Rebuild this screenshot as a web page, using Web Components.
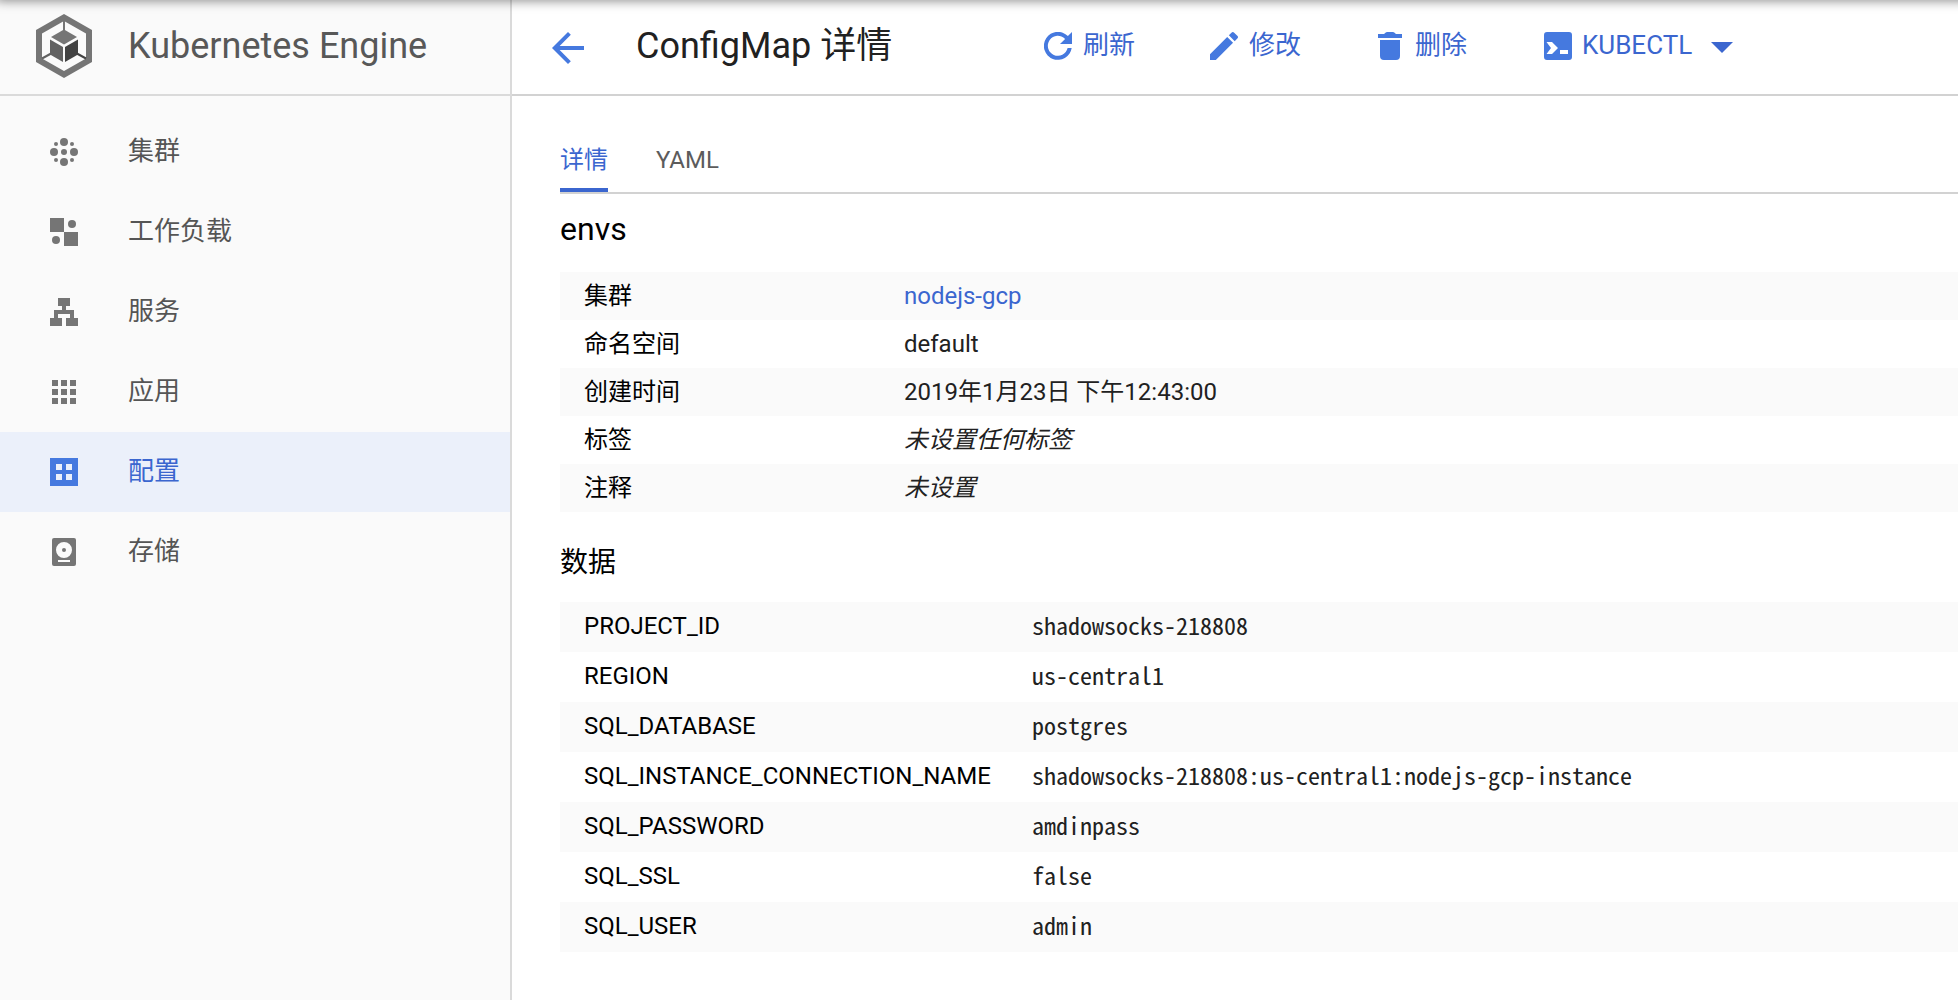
<!DOCTYPE html>
<html lang="zh-CN">
<head>
<meta charset="utf-8">
<title>ConfigMap 详情</title>
<style>
html,body{margin:0;height:100%;overflow:hidden;background:#fff}
body{font-family:Roboto,"Noto Sans CJK SC",sans-serif;font-size:24px;color:#212121}
</style>
</head>
<body>
<gke-app>
  <gke-sidebar slot="side" heading="Kubernetes Engine">
    <gke-nav-item icon="clusters">集群</gke-nav-item>
    <gke-nav-item icon="workloads">工作负载</gke-nav-item>
    <gke-nav-item icon="services">服务</gke-nav-item>
    <gke-nav-item icon="apps">应用</gke-nav-item>
    <gke-nav-item icon="config" active>配置</gke-nav-item>
    <gke-nav-item icon="storage">存储</gke-nav-item>
  </gke-sidebar>
  <gke-toolbar heading="ConfigMap 详情">
    <gke-action icon="refresh">刷新</gke-action>
    <gke-action icon="edit">修改</gke-action>
    <gke-action icon="trash" class="wide">删除</gke-action>
    <gke-action icon="shell" menu>KUBECTL</gke-action>
  </gke-toolbar>
  <gke-tabs>
    <gke-tab active>详情</gke-tab>
    <gke-tab>YAML</gke-tab>
  </gke-tabs>
  <gke-section heading="envs" class="info">
    <gke-row label="集群"><gke-link>nodejs-gcp</gke-link></gke-row>
    <gke-row label="命名空间">default</gke-row>
    <gke-row label="创建时间">2019年1月23日 下午12:43:00</gke-row>
    <gke-row label="标签"><i>未设置任何标签</i></gke-row>
    <gke-row label="注释"><i>未设置</i></gke-row>
  </gke-section>
  <gke-section heading="数据" class="data" compact>
    <gke-row mono label="PROJECT_ID">shadowsocks-218808</gke-row>
    <gke-row mono label="REGION">us-central1</gke-row>
    <gke-row mono label="SQL_DATABASE">postgres</gke-row>
    <gke-row mono label="SQL_INSTANCE_CONNECTION_NAME">shadowsocks-218808:us-central1:nodejs-gcp-instance</gke-row>
    <gke-row mono label="SQL_PASSWORD">amdinpass</gke-row>
    <gke-row mono label="SQL_SSL">false</gke-row>
    <gke-row mono label="SQL_USER">admin</gke-row>
  </gke-section>
</gke-app>
<script>
const ICONS = {
  logo: ['0 0 56 64', '<path fill="#757575" fill-rule="evenodd" d="M28 0 56 16V48L28 64 0 48V16ZM28 7 6 19.5V44.5L28 57 50 44.500V19.500Z"/><path stroke="#757575" stroke-width="2" d="M28 4V18"/><path stroke="#616161" stroke-width="2" d="M6 44.500 16 39"/><path stroke="#424242" stroke-width="2" d="M50 44.500 40 39"/><path fill="#757575" d="M28 15.500 41 23 28 30.500 15 23Z"/><path fill="#616161" d="M14 25.500 27 33V48L14 40.500Z"/><path fill="#424242" d="M42 25.500 29 33V48L42 40.500Z"/>'],
  clusters: ['0 0 28 28', '<circle cx="14" cy="4" r="4"/><circle cx="14" cy="24" r="4"/><circle cx="4" cy="14" r="4"/><circle cx="24" cy="14" r="4"/><circle cx="14" cy="14" r="3"/><circle cx="6" cy="6" r="2"/><circle cx="22" cy="6" r="2"/><circle cx="6" cy="22" r="2"/><circle cx="22" cy="22" r="2"/>'],
  workloads: ['0 0 28 28', '<path d="M0 0H14V14H0ZM14 14H28V28H14Z"/><circle cx="22" cy="6" r="4"/><circle cx="6" cy="22" r="4"/>'],
  services: ['0 0 28 28', '<path d="M8 0H20V8H16V12H24V20H28V28H16V20H20V16H8V20H12V28H0V20H4V12H12V8H8Z"/>'],
  apps: ['0 0 28 28', '<path d="M2 2h6v6H2zM11 2h6v6h-6zM20 2h6v6h-6zM2 11h6v6H2zM11 11h6v6h-6zM20 11h6v6h-6zM2 20h6v6H2zM11 20h6v6h-6zM20 20h6v6h-6z"/>'],
  config: ['0 0 28 28', '<path fill-rule="evenodd" d="M0 0H28V28H0ZM6 6V12H12V6ZM16 6V12H22V6ZM6 16V22H12V16ZM16 16V22H22V16Z"/>'],
  storage: ['0 0 28 28', '<path fill-rule="evenodd" d="M4 0H24a2 2 0 0 1 2 2V26a2 2 0 0 1-2 2H4a2 2 0 0 1-2-2V2a2 2 0 0 1 2-2ZM14 4a8 8 0 1 0 0 16 8 8 0 0 0 0-16ZM14 10a2 2 0 1 1 0 4 2 2 0 0 1 0-4ZM8 22V24H20V22Z"/>'],
  back: ['4 4 16 16', '<path d="M20 11H7.830l5.590-5.590L12 4l-8 8 8 8 1.410-1.410L7.830 13H20v-2z"/>'],
  refresh: ['0 0 28 28', '<path d="M23.900 4.100A14 14 0 1 0 27.700 16H23.600A10 10 0 1 1 21.100 6.900L16 12H28V0Z"/>'],
  edit: ['3 3 18 18', '<path d="M3 17.250V21h3.750L17.810 9.940l-3.750-3.750L3 17.250zM20.710 7.040c.39-.39.39-1.020 0-1.410l-2.340-2.340c-.39-.39-1.020-.39-1.410 0l-1.830 1.830 3.750 3.750 1.830-1.830z"/>'],
  trash: ['0 0 28 28', '<path d="M4 8H24V24a4 4 0 0 1-4 4H8a4 4 0 0 1-4-4ZM2 2H8Q10 0 11 0H17Q18 0 20 2H26V6H2Z"/>'],
  shell: ['0 0 28 28', '<path fill-rule="evenodd" d="M3 0H25a3 3 0 0 1 3 3V25a3 3 0 0 1-3 3H3a3 3 0 0 1-3-3V3a3 3 0 0 1 3-3ZM2.500 10 7 16 2.500 22H8L14 16 8 10ZM16 18V22H24V18Z"/>']
};
function define(name, render) {
  customElements.define(name, class extends HTMLElement {
    constructor() {
      super();
      this.attachShadow({ mode: 'open' }).innerHTML = render(this);
    }
  });
}
const attr = (el, n) => el.getAttribute(n) || '';

define('gke-icon', el => {
  const [box, body] = ICONS[attr(el, 'name')];
  return `<style>:host{display:block;flex:none;width:28px;height:28px}svg{display:block;width:100%;height:100%;fill:currentColor}</style><svg viewBox="${box}">${body}</svg>`;
});

define('gke-app', () => `<style>
:host{display:grid;grid-template-columns:512px 1fr;height:1000px;position:relative;overflow:hidden}
main{min-width:0}
.shade{position:absolute;inset:-10px -20px auto -4px;height:10px;box-shadow:0 0 12px rgba(0,0,0,.55);}
</style><slot name="side"></slot><main><slot></slot></main><div class="shade"></div>`);

define('gke-sidebar', el => `<style>
:host{display:block;box-sizing:border-box;width:512px;height:1000px;background:#fafafa;border-right:2px solid #dadada}
header{display:flex;align-items:center;box-sizing:border-box;height:96px;border-bottom:2px solid #dadada;padding-left:36px}
gke-icon{width:56px;height:64px;margin:-2px 36px 0 0}
h1{margin:-2px 0 0;font-size:36px;font-weight:400;line-height:48px;color:#585858;white-space:nowrap}
nav{padding-top:16px}
</style><header><gke-icon name="logo"></gke-icon><h1>${attr(el, 'heading')}</h1></header><nav><slot></slot></nav>`);

define('gke-nav-item', el => `<style>
:host{display:flex;align-items:center;height:80px;padding-left:50px;font-size:26px;color:#555}
:host([active]){background:#ebf0fa;color:#3b66cf}
gke-icon{margin-right:50px;color:#757575}
:host([active]) gke-icon{color:#4579df}
span{line-height:40px;margin-top:-2px}
</style><gke-icon name="${attr(el, 'icon')}"></gke-icon><span><slot></slot></span>`);

define('gke-toolbar', el => `<style>
:host{display:flex;align-items:center;box-sizing:border-box;height:96px;border-bottom:2px solid #d2d2d2;padding-left:40px}
.back{width:32px;height:32px;color:#4579df;margin:2px 52px 0 0}
h2{margin:-2px 0 0;width:404px;font-size:36px;font-weight:400;line-height:48px;color:#212121;white-space:nowrap}
</style><gke-icon class="back" name="back"></gke-icon><h2>${attr(el, 'heading')}</h2><slot></slot>`);

define('gke-action', el => `<style>
:host{display:flex;align-items:center;box-sizing:border-box;width:166px;padding-left:4px;font-size:26px;color:#3b66cf}
:host(.wide){width:168px}
:host([menu]){width:auto}
gke-icon{color:#4579df;margin:-2px 11px 0 0}
:host([menu]) gke-icon{margin-right:10px}
span{line-height:40px;margin-top:-4px;white-space:nowrap}
i{width:0;height:0;border:solid transparent;border-width:11px 11px 0;border-top-color:#3b66cf;margin:0 0 0 19px}
</style><gke-icon name="${attr(el, 'icon')}"></gke-icon><span><slot></slot></span>${el.hasAttribute('menu') ? '<i></i>' : ''}`);

define('gke-tabs', () => `<style>
:host{display:flex;gap:48px;align-items:flex-end;box-sizing:border-box;height:98px;margin-left:48px;border-bottom:2px solid #d2d2d2}
</style><slot></slot>`);

define('gke-tab', () => `<style>
:host{display:block;box-sizing:border-box;height:56px;line-height:48px;border-bottom:4px solid transparent;color:#5c5c5c}
:host([active]){color:#3b66cf;border-color:#3b66cf}
</style><slot></slot>`);

define('gke-section', el => `<style>
:host{display:block;margin-left:48px;--label:320px}
:host([compact]){--label:448px;--row:50px}
h3{margin:0;height:78px;line-height:70px;font-size:32px;font-weight:400;color:#000}
:host([compact]) h3{height:90px;line-height:102px;font-size:28px}
</style><h3>${attr(el, 'heading')}</h3><slot></slot>`);

define('gke-row', el => `<style>
:host{display:grid;grid-template-columns:var(--label) 1fr;align-items:center;box-sizing:border-box;height:var(--row,48px);padding-left:24px}
:host(:nth-child(odd)){background:#fafafa}
b{font-weight:400;color:#000}
b,span{line-height:30px;white-space:nowrap}
:host([mono]) b{margin-top:-2px}
:host([mono]) span{font-family:"Noto Sans Mono CJK SC","Liberation Mono",monospace;margin-top:-4px}
</style><b>${attr(el, 'label')}</b><span><slot></slot></span>`);

define('gke-link', () => `<style>:host{display:inline;color:#3b66cf}</style><slot></slot>`);
</script>
</body>
</html>
